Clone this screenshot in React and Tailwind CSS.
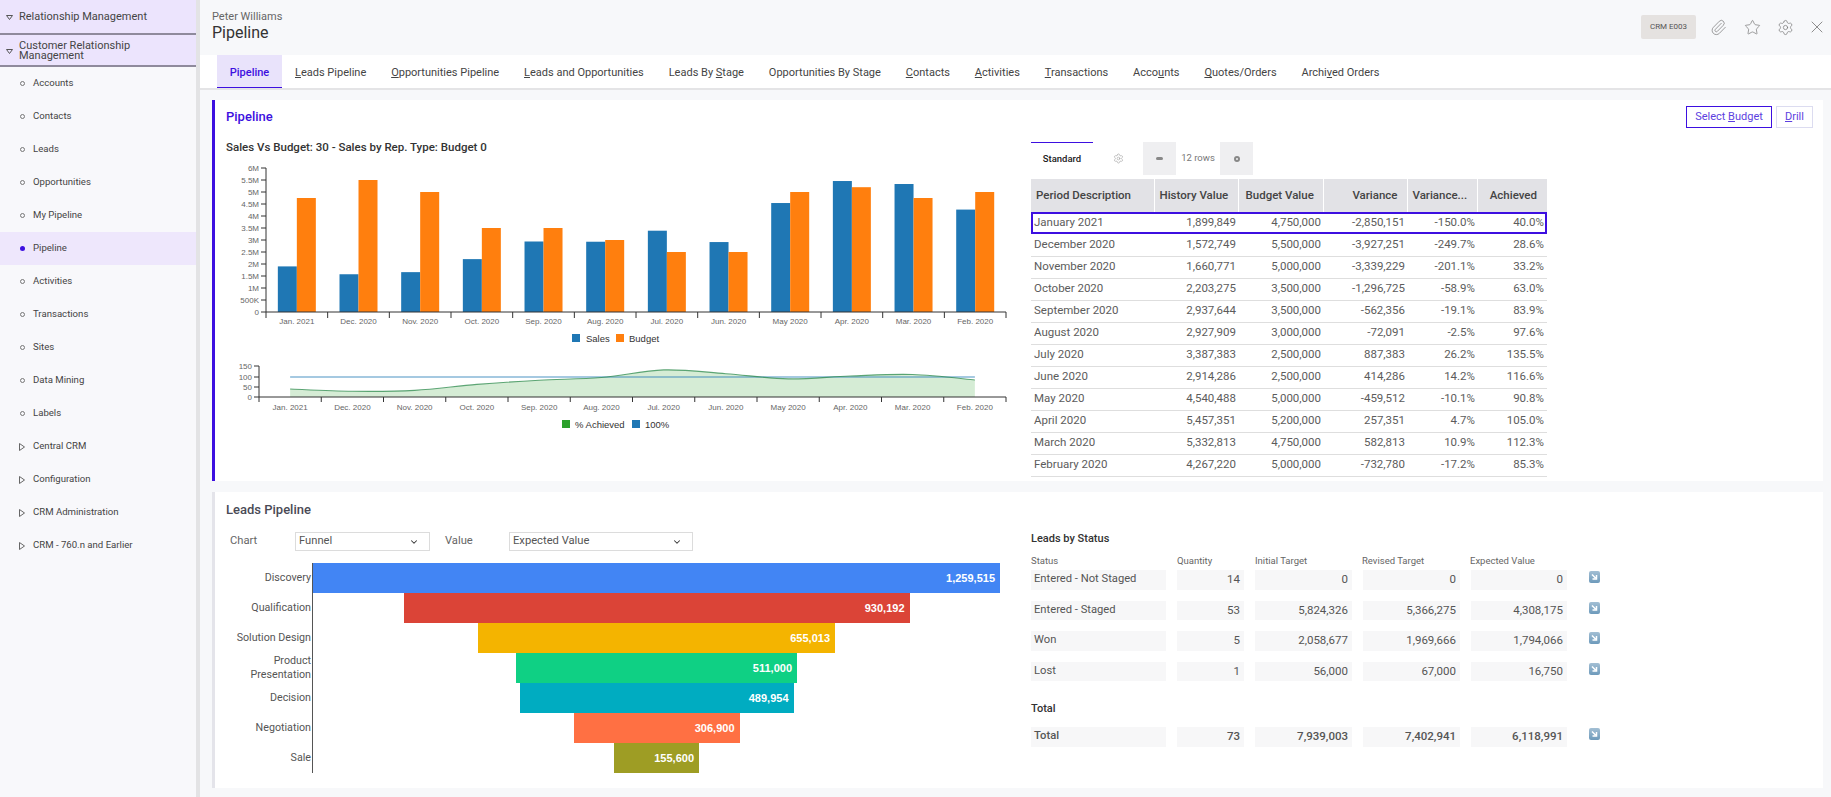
import React from 'react';
import { Paperclip, Star, Settings, X, ChevronDown } from 'lucide-react';

const side = ['Accounts','Contacts','Leads','Opportunities','My Pipeline','Pipeline','Activities','Transactions','Sites','Data Mining','Labels'];
const sideMore = ['Central CRM','Configuration','CRM Administration','CRM - 760.n and Earlier'];

const tabs = [
  ['Pipeline',''],['L','eads Pipeline'],['O','pportunities Pipeline'],['L','eads and Opportunities'],
  ['Leads By ','S','tage'],['Opportunities By Sta','g','e'],['C','ontacts'],['A','ctivities'],['T','ransactions'],
  ['Acco','u','nts'],['Q','uotes/Orders'],['Archi','v','ed Orders'],
];

const months = ['Jan. 2021','Dec. 2020','Nov. 2020','Oct. 2020','Sep. 2020','Aug. 2020','Jul. 2020','Jun. 2020','May 2020','Apr. 2020','Mar. 2020','Feb. 2020'];
const rows = [
  ['January 2021',1899849,4750000,'-2,850,151','-150.0%','40.0%',40],
  ['December 2020',1572749,5500000,'-3,927,251','-249.7%','28.6%',28.6],
  ['November 2020',1660771,5000000,'-3,339,229','-201.1%','33.2%',33.2],
  ['October 2020',2203275,3500000,'-1,296,725','-58.9%','63.0%',63],
  ['September 2020',2937644,3500000,'-562,356','-19.1%','83.9%',83.9],
  ['August 2020',2927909,3000000,'-72,091','-2.5%','97.6%',97.6],
  ['July 2020',3387383,2500000,'887,383','26.2%','135.5%',135.5],
  ['June 2020',2914286,2500000,'414,286','14.2%','116.6%',116.6],
  ['May 2020',4540488,5000000,'-459,512','-10.1%','90.8%',90.8],
  ['April 2020',5457351,5200000,'257,351','4.7%','105.0%',105],
  ['March 2020',5332813,4750000,'582,813','10.9%','112.3%',112.3],
  ['February 2020',4267220,5000000,'-732,780','-17.2%','85.3%',85.3],
];
const fmt = (n) => n.toLocaleString('en-US');

const funnel = [
  ['Discovery',1259515,687,'#4285f4'],
  ['Qualification',930192,506,'#db4437'],
  ['Solution Design',655013,357,'#f4b400'],
  ['Product Presentation',511000,281,'#0fd084'],
  ['Decision',489954,274,'#00acc1'],
  ['Negotiation',306900,166,'#ff7043'],
  ['Sale',155600,85,'#9e9d24'],
];

const status = [
  ['Entered - Not Staged','14','0','0','0'],
  ['Entered - Staged','53','5,824,326','5,366,275','4,308,175'],
  ['Won','5','2,058,677','1,969,666','1,794,066'],
  ['Lost','1','56,000','67,000','16,750'],
];

function Underlined({ parts, className }) {
  if (parts.length === 1 || parts[1] === '') return <span className={className}>{parts[0]}</span>;
  if (parts.length === 2) return <span className={className}><span className="underline">{parts[0]}</span>{parts[1]}</span>;
  return <span className={className}>{parts[0]}<span className="underline">{parts[1]}</span>{parts[2]}</span>;
}

function BarChart() {
  const x0 = 266, k = 24 / 1000000, band = 61.67;
  const ticks = ['0','500K','1M','1.5M','2M','2.5M','3M','3.5M','4M','4.5M','5M','5.5M','6M'];
  return (
    <svg width="800" height="210" viewBox="210 140 800 210" className="block" style={{ fontFamily: '"Liberation Sans", Arial, sans-serif' }}>
      {rows.map((r, i) => {
        const c = x0 + band * (i + 0.5);
        const h1 = r[1] * k, h2 = r[2] * k;
        return (
          <g key={i}>
            <rect x={c - 19} y={312 - h1} width="19" height={h1} fill="#1f77b4" />
            <rect x={c} y={312 - h2} width="19" height={h2} fill="#ff7f0e" />
            <text x={c} y="324" textAnchor="middle" fontSize="8" fill="#666">{months[i]}</text>
            <line x1={x0 + band * i} x2={x0 + band * i} y1="312" y2="318" stroke="#333" />
          </g>
        );
      })}
      <line x1="1006" x2="1006" y1="312" y2="318" stroke="#333" />
      <line x1={x0} x2="1006" y1="312" y2="312" stroke="#333" />
      <line x1={x0} x2={x0} y1="168" y2="312" stroke="#333" />
      {ticks.map((t, i) => {
        const y = 312 - i * 12;
        return (
          <g key={t}>
            <line x1={x0 - 5} x2={x0} y1={y} y2={y} stroke="#333" />
            <text x={x0 - 7} y={y + 3} textAnchor="end" fontSize="8" fill="#666">{t}</text>
          </g>
        );
      })}
      <rect x="572" y="334" width="8" height="8" fill="#1f77b4" />
      <text x="586" y="342" fontSize="9.5" fill="#333">Sales</text>
      <rect x="616" y="334" width="8" height="8" fill="#ff7f0e" />
      <text x="629" y="342" fontSize="9.5" fill="#333">Budget</text>
    </svg>
  );
}

function Spark() {
  const x0 = 259, band = 62.25, yOf = (v) => 397 - v * 0.2;
  const pts = rows.map((r, i) => [x0 + band * (i + 0.5), yOf(r[6])]);
  let d = `M${pts[0][0]},${pts[0][1]}`;
  for (let i = 0; i < pts.length - 1; i++) {
    const p0 = pts[Math.max(i - 1, 0)], p1 = pts[i], p2 = pts[i + 1], p3 = pts[Math.min(i + 2, pts.length - 1)];
    d += ` C${p1[0] + (p2[0] - p0[0]) / 6},${p1[1] + (p2[1] - p0[1]) / 6} ${p2[0] - (p3[0] - p1[0]) / 6},${p2[1] - (p3[1] - p1[1]) / 6} ${p2[0]},${p2[1]}`;
  }
  const first = pts[0][0], last = pts[11][0];
  return (
    <svg width="800" height="80" viewBox="210 360 800 80" className="block" style={{ fontFamily: '"Liberation Sans", Arial, sans-serif' }}>
      <path d={`${d} L${last},397 L${first},397 Z`} fill="#2ca02c" fillOpacity="0.2" />
      <line x1={first} x2={last} y1="377" y2="377" stroke="#1f77b4" strokeOpacity="0.4" strokeWidth="2" />
      <path d={d} fill="none" stroke="#2c8a4c" strokeOpacity="0.75" strokeWidth="1.1" />
      <line x1={x0} x2="1006" y1="397" y2="397" stroke="#333" />
      <line x1={x0} x2={x0} y1="366" y2="397" stroke="#333" />
      {[[0,397],[50,387],[100,377],[150,366]].map(([t, y]) => (
        <g key={t}>
          <line x1={x0 - 5} x2={x0} y1={y} y2={y} stroke="#333" />
          <text x={x0 - 7} y={y + 3} textAnchor="end" fontSize="8" fill="#666">{t}</text>
        </g>
      ))}
      {months.map((m, i) => (
        <g key={m}>
          <line x1={x0 + band * i} x2={x0 + band * i} y1="397" y2="402" stroke="#333" />
          <text x={x0 + band * (i + 0.5)} y="410" textAnchor="middle" fontSize="8" fill="#666">{m}</text>
        </g>
      ))}
      <line x1="1006" x2="1006" y1="397" y2="402" stroke="#333" />
      <rect x="562" y="420" width="8" height="8" fill="#2ca02c" />
      <text x="575" y="428" fontSize="9.5" fill="#333">% Achieved</text>
      <rect x="632" y="420" width="8" height="8" fill="#1f77b4" />
      <text x="645" y="428" fontSize="9.5" fill="#333">100%</text>
    </svg>
  );
}

function ArrowBtn() {
  return (
    <svg width="11" height="12" viewBox="0 0 11 12" className="ml-[22px] shrink-0 self-start mt-px">
      <defs>
        <linearGradient id="ab" x1="0" y1="0" x2="0" y2="1">
          <stop offset="0" stopColor="#a3bfd4" />
          <stop offset="1" stopColor="#6d9abb" />
        </linearGradient>
      </defs>
      <rect width="11" height="12" rx="2" fill="url(#ab)" />
      <path d="M3 3.5 L6.5 7 M7.5 4 V8 H3.5" stroke="#fff" strokeWidth="1.5" fill="none" />
    </svg>
  );
}

function Select({ label, w }) {
  return (
    <div className={`flex h-[19px] items-center justify-between border border-[#dcdcdc] pl-[3px] pr-[10px] text-[#555] ${w}`}>
      <span>{label}</span>
      <ChevronDown size={10} strokeWidth={2.5} color="#333" />
    </div>
  );
}

export default function App() {
  return (
    <div className="flex h-[797px] w-full overflow-hidden bg-[#f7f8fa] text-[12px] text-[#444]" style={{ fontFamily: 'Roboto, sans-serif' }}>
      <aside className="w-[200px] shrink-0 border-r-[4px] border-[#e3e3e5] bg-[#f8f8fb]">
        <div className="flex h-[35px] items-center border-b-2 border-[#8f8a9c] bg-[#ece4fd] pl-[6px] pt-[2px] text-[11px]">
          <svg width="7" height="5" viewBox="0 0 7 5" className="mr-[6px]"><path d="M0.5 0.5 H6.5 L3.5 4.5 Z" fill="none" stroke="#555" /></svg>
          Relationship Management
        </div>
        <div className="flex h-[32px] items-center border-b-2 border-[#8f8a9c] bg-[#ece4fd] pl-[6px] pt-[2px] text-[11px] leading-[10px]">
          <svg width="7" height="5" viewBox="0 0 7 5" className="mr-[6px] shrink-0"><path d="M0.5 0.5 H6.5 L3.5 4.5 Z" fill="none" stroke="#555" /></svg>
          <span>Customer Relationship<br />Management</span>
        </div>
        <div className="flex flex-col">
          {side.map((s) => (
            <div key={s} className={`flex h-[33px] items-center pl-[19px] text-[9.6px] ${s === 'Pipeline' ? 'bg-[#eee7fc]' : ''}`}>
              {s === 'Pipeline'
                ? <span className="mx-[1px] h-[5px] w-[5px] rounded-full bg-[#3d0fe0]" />
                : <span className="mx-[1px] h-[5px] w-[5px] rounded-full border border-[#777]" />}
              <span className="ml-[7px]">{s}</span>
            </div>
          ))}
          {sideMore.map((s) => (
            <div key={s} className="flex h-[33px] items-center pl-[19px] text-[9.6px]">
              <svg width="6" height="8" viewBox="0 0 6 8"><path d="M0.5 0.5 V7.5 L5.5 4 Z" fill="none" stroke="#666" /></svg>
              <span className="ml-[8px]">{s}</span>
            </div>
          ))}
        </div>
      </aside>

      <main className="flex min-w-0 flex-1 flex-col">
        <header className="flex h-[55px] shrink-0 items-start justify-between pl-[12px] pr-[4px]">
          <div className="pt-[11px]">
            <div className="text-[11px] leading-[12px] text-[#666]">Peter Williams</div>
            <div className="text-[16px] leading-[20px] text-[#333]">Pipeline</div>
          </div>
          <div className="flex items-center pt-[15px] text-[#777]">
            <div className="flex h-[24px] w-[55px] items-center justify-center rounded-[2px] bg-[#e5e2e0] text-[8px] text-[#555]">CRM E003</div>
            <Paperclip size={17} strokeWidth={1} className="ml-[14px]" />
            <Star size={17} strokeWidth={1} className="ml-[17px]" />
            <Settings size={17} strokeWidth={1} className="ml-[16px]" />
            <X size={20} strokeWidth={1} className="ml-[13px]" />
          </div>
        </header>

        <nav className="flex h-[35px] shrink-0 items-stretch border-b-2 border-[#e4e4e6] bg-white pl-[17px] text-[11px]">
          {tabs.map((t, i) => (
            i === 0
              ? <div key={i} className="mr-[13px] flex w-[65px] items-center justify-center border-b border-[#3d0fe0] bg-[#e9e3fb] pt-[4px] font-medium text-[#3d0fe0]">Pipeline</div>
              : <div key={i} className="mr-[24.9px] flex items-center pt-[4px] text-[#444]"><Underlined parts={t} /></div>
          ))}
        </nav>

        <div className="flex flex-1 flex-col gap-[11px] pl-[12px] pr-[8px] pt-[10px]">
          <section className="relative h-[381px] border-l-[3px] border-[#3d0fe0] bg-white">
            <div className="absolute right-[10px] top-[6px] flex gap-[4px] text-[11px]">
              <div className="flex h-[22px] w-[86px] items-center justify-center border border-[#3d0fe0] text-[#5d3fe0]"><span>Select <span className="underline">B</span>udget</span></div>
              <div className="flex h-[22px] w-[37px] items-center justify-center border border-[#dcdcf0] text-[#5d3fe0]"><span><span className="underline">D</span>rill</span></div>
            </div>
            <div className="pl-[11px] pt-[9px] text-[13px] font-medium leading-[16px] text-[#3d0fe0]">Pipeline</div>
            <div className="flex">
              <div className="w-[805px] shrink-0">
                <div className="pl-[11px] pt-[15px] text-[11.5px] font-medium leading-[14px] text-[#333]">Sales Vs Budget: 30 - Sales by Rep. Type: Budget 0</div>
                <div className="-ml-[5px] -mt-[14px]"><BarChart /></div>
                <div className="-ml-[5px] mt-[10px]"><Spark /></div>
              </div>
              <div className="mt-[17px] flex-1 pl-[11px]">
                <div className="flex h-[33px] items-stretch">
                  <div className="flex w-[62px] items-center justify-center border-t border-[#3d0fe0] text-[9.5px] font-medium text-[#222]">Standard</div>
                  <div className="flex w-[50px] items-center justify-center"><Settings size={11} strokeWidth={1} color="#888" /></div>
                  <div className="flex w-[110px] items-center bg-[#efeff1] text-[9.5px] text-[#777]">
                    <span className="flex w-[33px] justify-center"><span className="h-[3px] w-[7px] rounded-full bg-[#888]" /></span>
                    <span className="flex h-full w-[44px] items-center justify-center bg-white">12 rows</span>
                    <span className="flex w-[33px] justify-center"><span className="h-[6px] w-[6px] rounded-full border-[2px] border-[#888]" /></span>
                  </div>
                </div>
                <table className="mt-[4px] w-[516px] table-fixed border-collapse text-[11.5px]">
                  <colgroup><col className="w-[123px]" /><col className="w-[84px]" /><col className="w-[85px]" /><col className="w-[84px]" /><col className="w-[70px]" /><col className="w-[70px]" /></colgroup>
                  <thead>
                    <tr className="h-[33px] bg-[#e2e2e6] font-medium text-[#444]">
                      <th className="border-r border-white px-[5px] text-left font-medium">Period Description</th>
                      <th className="border-r border-white px-[5px] text-left font-medium">History Value</th>
                      <th className="border-r border-white pl-[7px] text-left font-medium">Budget Value</th>
                      <th className="border-r border-white px-[9px] text-right font-medium">Variance</th>
                      <th className="border-r border-white px-[5px] text-left font-medium">Variance...</th>
                      <th className="px-[10px] text-right font-medium">Achieved</th>
                    </tr>
                  </thead>
                  <tbody>
                    {rows.map((r, i) => (
                      <tr key={r[0]} className={`h-[22px] ${i === 0 ? 'outline-2 -outline-offset-2 outline-[#3d0fe0]' : 'border-b border-[#dedede]'} text-[#5c5c5c]`}>
                        <td className="pl-[3px]">{r[0]}</td>
                        <td className="pr-[2px] text-right">{fmt(r[1])}</td>
                        <td className="pr-[2px] text-right">{fmt(r[2])}</td>
                        <td className="pr-[2px] text-right">{r[3]}</td>
                        <td className="pr-[2px] text-right">{r[4]}</td>
                        <td className="pr-[3px] text-right">{r[5]}</td>
                      </tr>
                    ))}
                  </tbody>
                </table>
              </div>
            </div>
          </section>

          <section className="flex h-[296px] border-l-[3px] border-[#e4e4ea] bg-white">
            <div className="w-[805px] shrink-0">
              <div className="pl-[11px] pt-[10px] text-[13px] font-medium leading-[16px] text-[#4a4a55]">Leads Pipeline</div>
              <div className="mt-[14px] flex items-center text-[11.2px] text-[#666]">
                <span className="ml-[15px] w-[65px]">Chart</span>
                <Select label="Funnel" w="w-[135px]" />
                <span className="ml-[15px] w-[64px]">Value</span>
                <Select label="Expected Value" w="w-[184px]" />
              </div>
              <div className="ml-[11px] mt-[12px] flex">
                <div className="w-[86px] shrink-0 pr-[1px] text-right text-[10.7px] leading-[14px] text-[#555]">
                  {funnel.map((f) => (
                    <div key={f[0]} className="flex h-[30px] items-center justify-end">{f[0]}</div>
                  ))}
                </div>
                <div className="w-[688px] border-l border-[#555]">
                  {funnel.map((f) => (
                    <div key={f[0]} className="flex h-[30px] justify-center">
                      <div className="flex h-full items-center justify-end pr-[5px] text-[11px] font-bold text-white" style={{ width: f[2], backgroundColor: f[3], fontFamily: '"Liberation Sans", Arial, sans-serif' }}>{fmt(f[1])}</div>
                    </div>
                  ))}
                </div>
              </div>
            </div>
            <div className="flex-1 pl-[11px] pt-[40px] text-[11.5px] text-[#555]">
              <div className="text-[11px] font-medium leading-[14px] text-[#333]">Leads by Status</div>
              <div className="mt-[9px] flex text-[9.5px] leading-[12px] text-[#666]">
                <span className="w-[146px]">Status</span>
                <span className="w-[78px]">Quantity</span>
                <span className="w-[107px]">Initial Target</span>
                <span className="w-[108px]">Revised Target</span>
                <span>Expected Value</span>
              </div>
              <div className="mt-[3px] flex flex-col gap-[11px]">
                {status.map((s) => <StatusRow key={s[0]} s={s} />)}
              </div>
              <div className="mt-[21px] text-[11px] font-medium leading-[14px] text-[#333]">Total</div>
              <div className="mt-[11px]"><StatusRow s={['Total','73','7,939,003','7,402,941','6,118,991']} bold /></div>
            </div>
          </section>
        </div>
      </main>
    </div>
  );
}

function StatusRow({ s, bold }) {
  const cell = 'flex h-[19.5px] items-center bg-[#f7f7f8] px-[4px]';
  return (
    <div className={`flex ${bold ? 'font-medium' : ''}`}>
      <div className={`${cell} w-[135px] !pl-[3px] text-[11.2px]`}>{s[0]}</div>
      <div className={`${cell} ml-[11px] w-[67px] justify-end`}>{s[1]}</div>
      <div className={`${cell} ml-[11px] w-[97px] justify-end`}>{s[2]}</div>
      <div className={`${cell} ml-[11px] w-[97px] justify-end`}>{s[3]}</div>
      <div className={`${cell} ml-[11px] w-[96px] justify-end`}>{s[4]}</div>
      <ArrowBtn />
    </div>
  );
}
